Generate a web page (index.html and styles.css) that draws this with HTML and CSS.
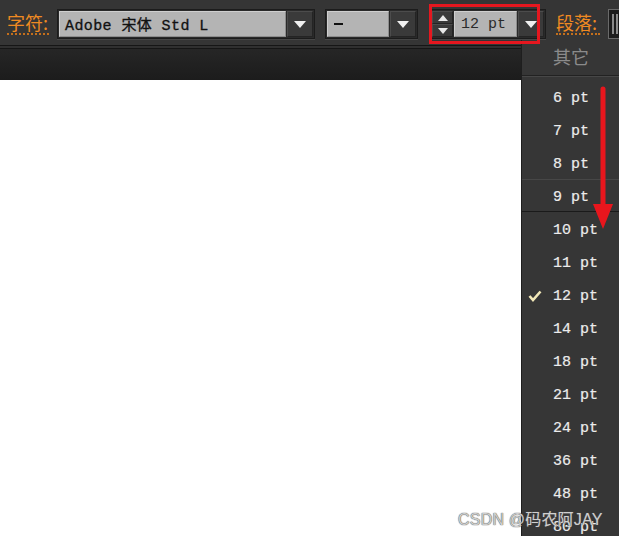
FILE: index.html
```html
<!DOCTYPE html>
<html>
<head>
<meta charset="utf-8">
<link rel="stylesheet" href="styles.css">
</head>
<body>
<div class="toolbar">
  <span class="label label-char">字符:</span>
  <div class="combo combo-font">
    <div class="field field-font">Adobe 宋体 Std L</div>
    <div class="btn"><span class="tri"></span></div>
  </div>
  <div class="combo combo-style">
    <div class="field field-style"><span class="dash"></span></div>
    <div class="btn"><span class="tri"></span></div>
  </div>
  <div class="combo combo-size">
    <div class="spinner">
      <div class="spin spin-up"><span class="tri-up"></span></div>
      <div class="spin spin-down"><span class="tri-sm"></span></div>
    </div>
    <div class="field field-size">12 pt</div>
    <div class="btn"><span class="tri"></span></div>
  </div>
  <span class="label label-para">段落:</span>
  <div class="edge-btn"><span></span><span></span></div>
</div>
<div class="sep"></div>
<div class="strip"></div>
<div class="canvas"></div>

<div class="menu">
  <div class="menu-head">其它</div>
  <div class="menu-items">
    <div class="item">6 pt</div>
    <div class="item">7 pt</div>
    <div class="item">8 pt</div>
    <div class="item item-hover">9 pt</div>
    <div class="item">10 pt</div>
    <div class="item">11 pt</div>
    <div class="item item-checked">
      <svg class="check" width="14" height="12" viewBox="0 0 14 12"><polyline points="1.5,6 5,10 12.5,1.5" fill="none" stroke="#f2e8b8" stroke-width="2.6"/></svg>12 pt</div>
    <div class="item">14 pt</div>
    <div class="item">18 pt</div>
    <div class="item">21 pt</div>
    <div class="item">24 pt</div>
    <div class="item">36 pt</div>
    <div class="item">48 pt</div>
    <div class="item">80 pt</div>
  </div>
</div>

<div class="redbox"></div>
<svg class="arrow" width="26" height="148" viewBox="0 0 26 148">
  <line x1="13" y1="4" x2="13" y2="122" stroke="#e8161d" stroke-width="5" stroke-linecap="round"/>
  <polygon points="3,119 23,119 13,144" fill="#e8161d"/>
</svg>
<div class="watermark">CSDN @码农阿JAY</div>
</body>
</html>
```
FILE: styles.css
```css
* { box-sizing: border-box; }
html, body { margin: 0; padding: 0; }
body {
  width: 619px;
  height: 536px;
  overflow: hidden;
  background: #ffffff;
  font-family: "Liberation Mono", "Noto Sans CJK SC", monospace;
  position: relative;
}
.toolbar {
  height: 45px;
  background: #353535;
  display: flex;
  align-items: flex-start;
  padding-top: 9px;
  padding-left: 7px;
  overflow: hidden;
}
.toolbar > * { flex: none; }
.label {
  font-family: "Noto Sans CJK SC", sans-serif;
  font-size: 18px;
  line-height: 22px;
  color: #ef8a22;
  margin-top: 2px;
  height: 24px;
  border-bottom: 2px dotted #c46f1c;
  white-space: nowrap;
}
.label-char { width: 42px; margin-right: 8px; }
.label-para { width: 44px; margin-left: 10px; }
.combo {
  display: flex;
  height: 30px;
  border: 1px solid #1c1c1c;
  background: #2a2a2a;
  box-shadow: 0 1px 0 #474747;
}
.combo-font { width: 258px; }
.combo-style { width: 93px; margin-left: 10px; }
.combo-size { width: 116px; margin-left: 12px; }
.field {
  flex: 1;
  background: #b4b4b4;
  border: 1px solid #cfcfcf;
  border-right-color: #8d8d8d;
  border-bottom-color: #8d8d8d;
  margin: 1px 0 1px 1px;
  color: #111;
  display: flex;
  align-items: center;
  white-space: nowrap;
  overflow: hidden;
}
.field-font {
  font-size: 15px;
  padding-left: 5px;
  letter-spacing: 0.4px;
  -webkit-text-stroke: 0.3px #111;
}
.field-style { padding-left: 6px; }
.dash { display: block; width: 9px; height: 2px; background: #111; }
.field-size {
  font-family: "Liberation Mono", monospace;
  font-size: 15px;
  padding-left: 6px;
  color: #2a2a2a;
  margin-left: 1px;
}
.btn {
  width: 26px;
  flex: none;
  background: #3a3a3a;
  border: 1px solid #4c4c4c;
  border-right-color: #242424;
  border-bottom-color: #242424;
  margin: 1px 1px 1px 1px;
  display: flex;
  align-items: center;
  justify-content: center;
}
.tri {
  width: 0; height: 0;
  border-left: 6px solid transparent;
  border-right: 6px solid transparent;
  border-top: 7px solid #f0f0f0;
}
.spinner {
  width: 21px;
  flex: none;
  display: flex;
  flex-direction: column;
  margin: 1px 0 1px 1px;
}
.spin {
  flex: 1;
  background: #3a3a3a;
  border: 1px solid #4c4c4c;
  border-right-color: #242424;
  border-bottom-color: #242424;
  display: flex;
  align-items: center;
  justify-content: center;
}
.tri-up {
  width: 0; height: 0;
  border-left: 5px solid transparent;
  border-right: 5px solid transparent;
  border-bottom: 6px solid #e8e8e8;
}
.tri-sm {
  width: 0; height: 0;
  border-left: 5px solid transparent;
  border-right: 5px solid transparent;
  border-top: 6px solid #e8e8e8;
}
.edge-btn {
  width: 20px;
  height: 30px;
  margin-left: 8px;
  background: #1c1c1c;
  border: 1px solid #6a6a6a;
  display: flex;
  gap: 2px;
  padding: 4px 3px;
}
.edge-btn span { width: 2px; background: #8a8a8a; }
.sep {
  height: 4px;
  border-top: 1px solid #161616;
  border-bottom: 1px solid #161616;
  background: #303030;
}
.strip {
  height: 31px;
  background: linear-gradient(#262626, #1c1c1c);
}
.canvas { height: 456px; background: #fff; }

.menu {
  position: absolute;
  left: 521px;
  top: 40px;
  width: 98px;
  height: 496px;
  background: #363636;
  border-left: 1px solid #1e1e1e;
  overflow: hidden;
}
.menu-head {
  height: 36px;
  display: flex;
  align-items: center;
  padding-left: 31px;
  padding-bottom: 4px;
  font-family: "Noto Sans CJK SC", sans-serif;
  font-size: 18px;
  color: #8b8b8b;
  border-bottom: 1px solid #222;
}
.menu-items { border-top: 1px solid #474747; padding-top: 3px; }
.item {
  height: 33px;
  display: flex;
  align-items: center;
  padding-left: 31px;
  padding-top: 4px;
  font-size: 15px;
  color: #ececec;
  -webkit-text-stroke: 0.2px #ececec;
  white-space: nowrap;
  position: relative;
}
.item-hover {
  border-top: 1px solid #474747;
  border-bottom: 1px solid #1a1a1a;
}
.check { position: absolute; left: 6px; top: 12px; }

.redbox {
  position: absolute;
  left: 429px;
  top: 4px;
  width: 111px;
  height: 40px;
  border: 3px solid #e5171f;
}
.arrow { position: absolute; left: 590px; top: 85px; }
.watermark {
  position: absolute;
  left: 458px;
  top: 506px;
  font-family: "Liberation Sans", "Noto Sans CJK SC", sans-serif;
  font-size: 16px;
  letter-spacing: 0.2px;
  color: #cfcfcf;
  text-shadow: 0 0 1px #5a5a5a, 0 0 1px #5a5a5a;
  white-space: nowrap;
}
```
